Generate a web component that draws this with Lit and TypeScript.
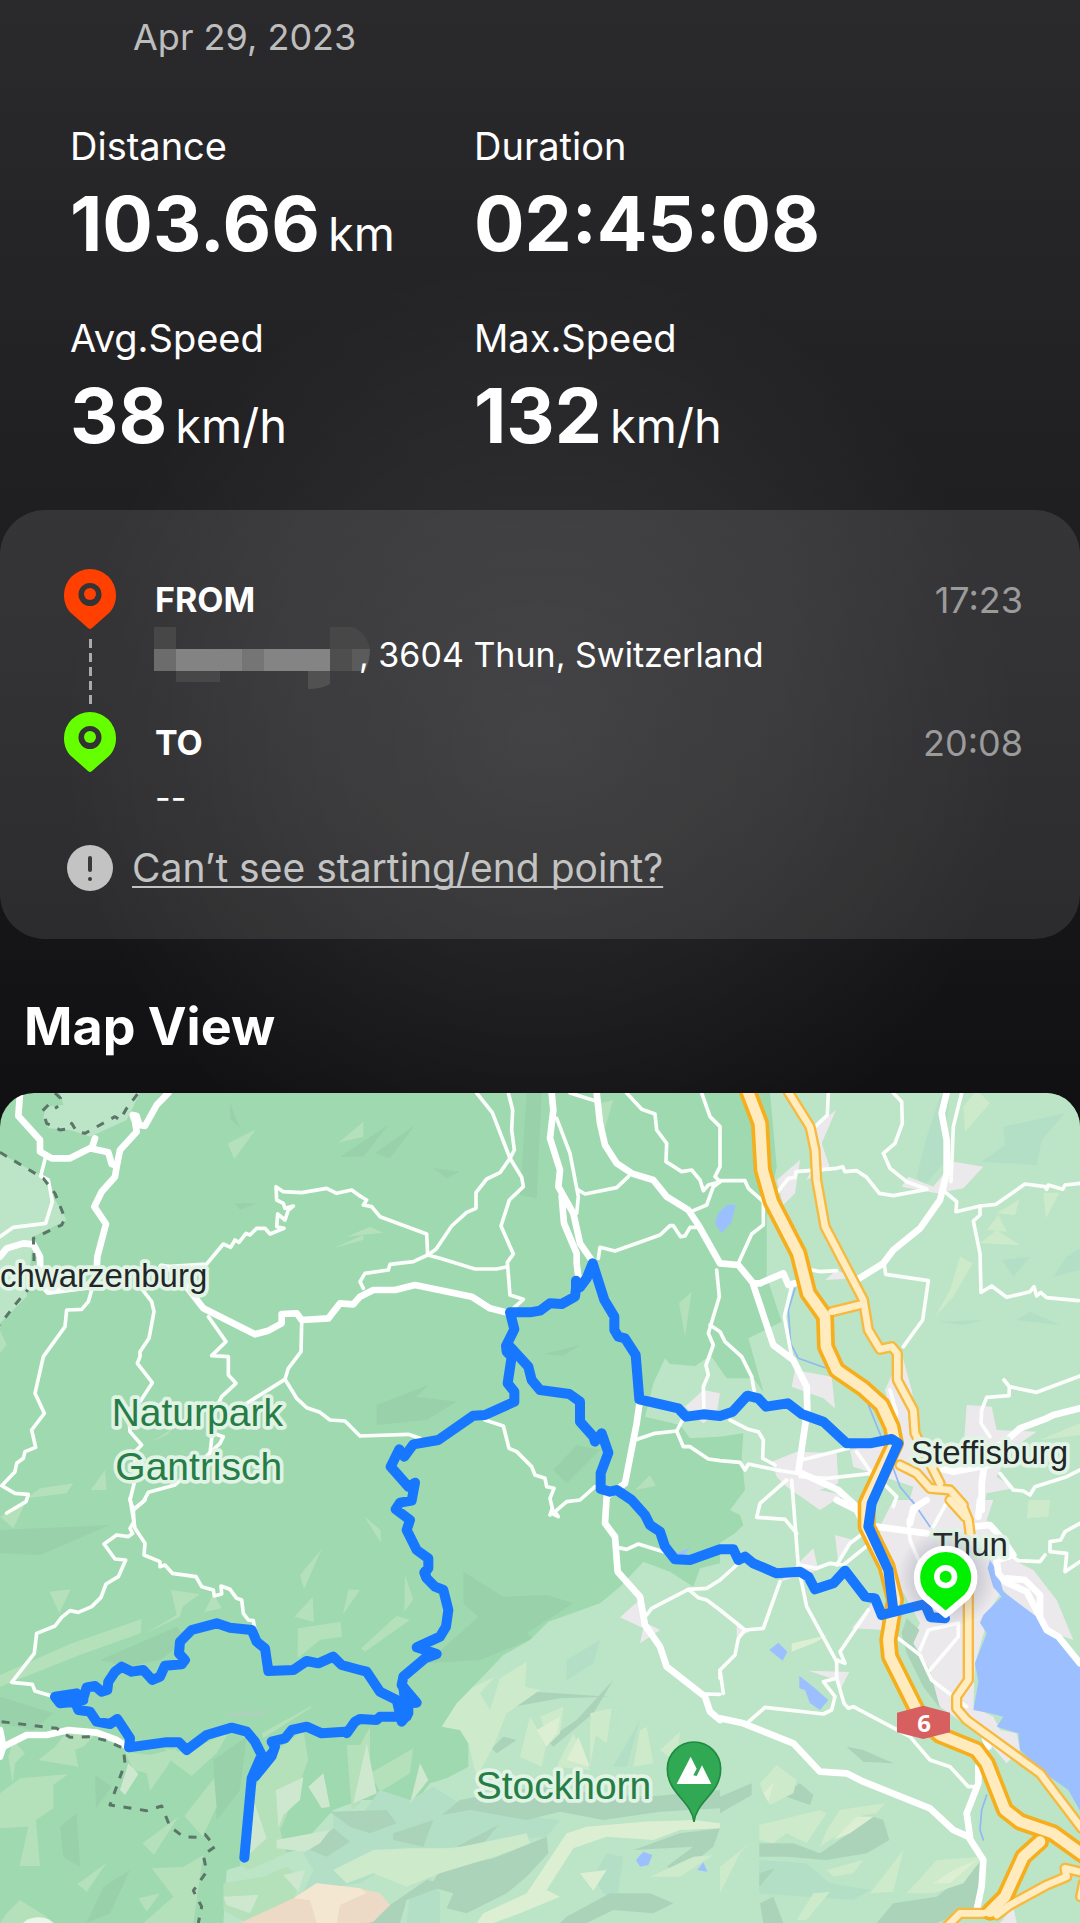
import { LitElement, html, svg, css } from "lit";
import { customElement } from "lit/decorators.js";

/* Map geometry is stored per tile; a capital letter switches to that tile's origin. */
const TILES: Record<string, [number, number]> = {
  A: [0, 0], B: [1080, 0], C: [2160, 0],
  D: [0, 1230], E: [1080, 1230], F: [2160, 1230],
};

function points(data: string): string {
  let origin: [number, number] = [0, 0];
  const out: string[] = [];
  for (const token of data.trim().split(/\s+/)) {
    if (TILES[token]) {
      origin = TILES[token];
    } else {
      const [x, y] = token.split(",").map(Number);
      out.push(`${x + origin[0]},${y + origin[1]}`);
    }
  }
  return out.join(" ");
}

const lines = (cls: string, list: string[]) =>
  list.map((d) => svg`<polyline class=${cls} points=${points(d)}></polyline>`);
const areas = (cls: string, list: string[]) =>
  list.map((d) => svg`<polygon class=${cls} points=${points(d)}></polygon>`);

const LIGHT_LAND = [
  "C 150,9 170,230 140,380 140,560 185,695 85,745 130,905 100,865 20,865 -25,800 B 1035,808 1005,828 930,822 915,805 880,880 855,980 960,1005 990,1045 C 0,1040 70,1030 65,1100 75,1200 30,1260 F 60,45 70,75 45,100 0,128 E 1080,190 1020,205 1000,260 930,215 850,185 780,260 720,310 565,365 510,420 430,465 320,580 250,680 300,690 325,730 325,800 260,835 210,850 160,915 60,900 0,900 -80,930 -190,1050 -300,1080 -400,1110 -410,1269 1080,1270 F 1090,1270 1090,-1300",
  "A 180,9 190,45 140,50 130,80 145,115 210,120 240,130 270,140 380,90 420,9",
  "A 0,190 120,255 160,320 200,390 100,440 80,620 0,700",
];
const PALE_FACETS = [
  "A 768,118 683,160 703,208", "A 1015,158 1090,95 1090,140", "B -40,440 30,410 70,428", "A 1000,475 1090,435 1090,450",
  "B 957,640 995,605 975,740", "B 825,1200 870,1155 888,1188", "B 720,40 760,30 730,130", "A 80,1225 120,1195 220,1180 200,1210",
  "A 272,1200 315,1140 320,1200", "A 455,1055 520,1015 500,1035", "A 0,720 20,765 0,790",
  "D 0,525 215,430 425,357 422,400 240,465 0,560", "D 148,275 212,268 178,340", "D 0,50 80,0 40,85", "D 513,270 600,282 548,320 540,350 437,400 530,345",
  "D 665,325 640,280 613,337", "D 900,225 965,147 912,268", "D 883,350 938,290 942,367", "D 893,385 1022,365 1026,410 960,420 893,475", "D 1045,268 1080,270 1028,345",
  "D 785,700 935,617 930,625 790,715", "E 12,48 62,90 63,128", "E 135,225 160,298 133,335", "E 110,347 150,360 15,455 3,445", "E 30,820 160,745 150,820 60,875",
];
const LEFT_FACETS = [
  "D 60,835 205,822 160,855 160,925 108,960 120,1098 58,1098 85,980 0,985 0,880", "D 40,720 75,760 45,790 38,850 25,770", "D 205,690 285,705 250,740 225,750 235,800 115,780 165,740",
  "D 375,755 450,765 530,745 505,795 450,873 440,820 400,810", "D 495,745 560,760 690,690 650,760 575,828 510,780",
  "D 553,948 642,835 650,920 608,1010", "D 427,1030 535,950 462,1065", "D 455,1105 550,1100 610,1065 600,1130 580,1269 430,1269 520,1190",
  "D 232,1153 320,1088 260,1175", "D 415,1195 480,1180 440,1235", "D 20,1240 60,1200 140,1250 150,1269 0,1269",
  "D 820,760 910,690 925,780 880,900 840,990 860,1060 745,1110 720,1095 745,900",
  "D 1040,735 1080,735 E 30,680 30,830 0,910 D 1055,930",
  "D 670,1150 790,1130 860,1100 900,1130 880,1210 740,1269 670,1230",
];
const PALE_RIDGES = [
  "D 828,870 910,832 900,900 850,945 835,985", "D 925,860 970,820 990,920 965,925", "D 762,905 800,1015 748,1062", "D 830,1020 990,990 960,1030 915,1055 830,1045",
  "D 360,870 385,790 415,822 375,885", "E 20,730 50,880 -20,910", "E 150,910 180,790 205,840", "D 670,1190 775,1185 750,1240 680,1215", "D 850,1125 915,1110 895,1175",
];
const CREAM_FACETS = [
  "E 245,680 290,610 340,560 405,530 360,580 390,630 420,535 500,485 495,560 540,570 440,640 400,740 350,830 325,730 300,690", "E 510,650 560,730 545,800 480,770",
  "E 540,650 610,620 600,700 570,730", "E 690,640 755,625 740,730 700,700", "E 640,700 690,810 590,800", "E 840,690 860,680 880,790 820,800",
  "E 900,750 960,695 950,790", "E 690,660 720,640 690,800",
  "E -80,1110 40,1050 150,1045 280,1045 500,1000 510,1030 420,1065 240,1120 140,1160 40,1120 -40,1150",
  "F 118,975 300,930 320,940 260,1030 200,1000 160,1030 118,1020", "F 320,990 360,930 420,920 495,910 470,940 430,945 390,980 300,1040",
  "F 560,1180 650,1080 790,1070 730,1150 640,1180", "F 120,850 170,795 230,840 220,880 150,915 130,880", "F 320,1110 430,1080 400,1120 340,1130", "F 450,1180 550,1050 520,1175", "F 230,1260 280,1180 330,1175 260,1260",
  "F 0,1180 60,1060 90,1030 0,1100", "E 870,1130 1000,1070 1060,1065 960,1130",
  "C 730,50 770,0 810,40 735,125", "C 720,500 758,520 700,620 645,680 690,600", "C 830,370 898,328 885,375", "C 800,420 835,375 860,425", "C 780,460 830,420 900,465", "C 970,308 1018,308 978,385", "C 960,1050 1080,1000 1080,1035", "F 925,0 990,0 985,50 920,55",
];
const BRIGHT_FACETS = [
  "E 350,1269 370,1240 500,1180 560,1090 620,1000 680,980 850,965 1000,960 1080,970 1080,985 960,990 880,1020 740,1010 640,1045 560,1170 600,1190 480,1240 400,1269",
  "E 660,1120 740,1110 700,1172", "E 530,690 600,650 590,700 560,740", "E 620,780 655,710 690,800", "F 215,455 215,430 325,405 280,430",
  "F 640,1150 700,1110 770,1080 690,1150", "F 340,1020 410,950 460,950 390,1000", "F 130,880 160,850 145,905",
];
const SHADE_FACETS = [
  "E 300,900 460,870 560,860 700,880 860,890 1080,870 1080,925 900,935 730,960 600,935 500,960 330,930 245,945", "E -90,935 80,930 110,970 30,1000 -30,980", "E 100,1000 220,960 190,1040 100,1020",
  "D 930,1050 1000,985 1050,1025 980,1070", "E 210,1160 240,1110 400,1075 560,1010 565,1060 500,1130 440,1180 320,1240 260,1225 280,1180", "E 20,1269 90,1215 200,1140 260,1155 140,1200 120,1269", "E 290,1040 415,975 370,1030 330,1045", "E 820,1050 960,1000 1080,985 1060,1040 960,1120 920,1100 1000,1040",
  "E 620,1250 750,1180 870,1180 940,1210 880,1240 760,1230 680,1269 600,1269", "E 445,610 520,575 750,590 600,595 460,620", "E 515,670 570,715 650,660 760,540 700,640 580,740", "E 395,745 430,710 470,720 410,760",
  "F 185,885 240,850 280,885 270,915", "F 118,1030 220,1030 300,1060 460,950 490,960 508,1020 440,1060 320,1080 200,1070 118,1070", "F 380,740 430,750 520,790 430,785",
  "F 0,890 95,850 95,885 0,940", "F 470,1269 520,1210 650,1190 790,1080 790,1150 770,1220 650,1269", "F 120,1210 160,1190 190,1269 130,1269", "F 118,1120 165,1105 118,1160",
  "D 675,650 690,638 800,630 785,650",
];
const TEAL_FACETS = [
  "D 905,1050 1000,985 1000,935 1080,950 E 60,870 150,900 220,860 330,930 600,960 560,1010 250,1045 100,1090 D 1080,1150 910,1175 940,1110", "E 140,1269 150,1180 210,1130 240,1180 240,1269", "E 700,1130 740,1060 790,1070 770,1200 730,1180",
  "E 620,480 720,420 700,490 620,540", "E 760,800 840,660 800,800", "C 785,215 855,165 850,110 1035,70 965,150 950,225", "C 845,510 930,500 880,560", "C 1000,560 1040,500 1080,475 1080,540",
  "C 890,690 930,665 1020,705", "C 655,695 790,690 730,705", "C 620,140 660,20 690,9 670,220 610,290 590,260", "F 118,1080 260,1090 330,1150 450,1170 400,1200 118,1180",
];
const DARK_FACETS = [
  "B 50,945 205,885 170,920 290,935 200,990 50,1005", "B 580,1140 650,1065 720,1080 620,1180", "B 550,793 660,765 610,797", "A 690,40 720,115 690,85", "A 1020,200 1165,105 1090,200",
  "B 45,190 165,105 90,205", "B 500,9 545,9 530,325 480,315", "D 300,480 530,380 560,420 480,480 380,500", "E 310,215 430,290 560,285 640,310 500,400 520,415 360,480 200,490 355,350 310,310",
  "D 0,90 330,75 120,165 0,160", "D 0,590 160,640 100,690 0,670", "B 220,235 300,245 260,265", "A 705,340 768,340 720,360",
  "D 180,980 230,940 240,1100 190,1070", "D 640,780 740,710 720,870 650,960", "D 260,1269 310,1160 390,1110 330,1240", "D 285,825 335,860 288,925",
];
const SAND = ["D 720,1269 880,1195 950,1150 1080,1165 E 60,1180 90,1215 40,1265 0,1269"];
const SAND_DARK = ["E -40,1220 60,1180 90,1215 30,1269 -30,1260", "D 770,1250 880,1195 930,1200 950,1269 860,1269"];
const TOWN = [
  "C 348,60 285,110 300,180 260,270 330,235 305,160", "C 240,210 170,270 190,345 225,310", "C 700,215 790,230 730,295 650,310 545,290 565,260 640,290",
  "C 315,570 350,540 400,565", "C 225,840 335,860 345,955 310,925 215,890", "C 495,900 545,790 575,900 600,1040 660,1100 730,1090 740,945 815,950 830,1020 950,1025 870,1080 830,1160 880,1195 800,1210 790,1260 560,1260 580,1190 400,1130 390,1080 480,1060 530,1050",
  "C 155,1115 230,1085 350,1090 355,1180 300,1200 370,1215 300,1260 200,1190 170,1160", "B 975,950 1030,900 1080,910 1070,970 1030,1000",
  "F 480,80 520,0 820,0 800,60 860,120 860,170 940,210 1010,300 1060,420 950,380 850,270 780,370 800,370 765,490 760,620 820,650 840,690 890,700 900,750 860,790 800,720 730,670 660,620 620,500 570,430 600,370 480,150",
  "F 345,105 400,120 355,190", "F 235,190 280,145 295,210 180,245", "F 395,385 455,310 500,390", "F 265,512 388,516 360,570 350,540", "F 50,370 90,395 50,410", "E 780,352 850,290 860,370 900,390 840,430 850,385",
  "F 880,1220 840,1269 890,1269", "F 285,0 300,15 345,0",
];
const WOODS = ["F 545,400 560,360 590,390 580,430 630,510 660,625 610,560 560,460", "F 545,400 560,355 598,390 575,440"];
const WATER = [
  "F 850,275 835,220 810,180 803,205 820,262 845,290 790,345 780,368 800,400 765,490 775,545 760,630 810,640 850,650 830,680 895,700 900,750 960,810 1045,870 1090,950 1090,490 1030,430 985,400 950,350",
  "C -5,370 20,345 47,345 35,395 5,430 -15,400", "F 148,450 175,428 202,455 188,482", "F 238,527 285,565 325,600 300,630 270,610 255,570 238,565",
  "E 828,1080 850,1055 877,1065 865,1095 840,1100", "E 1012,1110 1030,1087 1042,1115", "E 950,160 990,143 965,175",
];
const STREAMS = ["C 225,595 205,660 212,760 235,805 315,833", "C 445,945 500,1080 540,1190 590,1250", "F 575,0 630,80", "F 800,885 785,930 780,990 790,1020"];
const BORDERS = [
  "A 165,9 182,25 180,45 165,55", "A 145,45 128,62 140,100 180,120 210,115 215,100 230,125 255,130 345,80 360,90 380,55 415,9",
  "A 0,187 130,265 165,310 195,385 185,405 100,445 102,500 100,580 40,650 0,705",
  "D 5,665 170,685 210,712 270,710 320,722 370,745 375,790 330,915 440,932 485,918 510,980 550,1010 590,1012 615,1003 645,1040 610,1065 620,1115 580,1172 605,1220 595,1269",
];
const ROADS_THIN = [
  "A 137,200 122,258 145,270 157,335 137,400 40,412 0,440", "B 0,318 20,330 10,345 35,350 60,380 200,432 203,495 228,478 275,408 320,367 348,355 348,308 380,267 420,248 450,205 397,68 350,9",
  "A 1080,318 1055,300 1010,310 980,295 905,308 850,305 828,290 830,330 850,340 855,355 880,348 865,360 855,390 833,372 830,410 852,415 810,432 795,415 770,415 750,435 738,430 717,457 705,450 692,472 670,462 620,522 500,530",
  "B 445,9 458,60 455,120 463,180 450,205 485,262 490,290 448,330 423,408 460,492 442,517 450,615 490,628 460,655", "B 442,530 410,537 345,537 240,505 203,495 160,515 90,523 85,540 15,550 0,575 10,595",
  "A 275,600 265,635 245,658 200,660 195,710 130,800 105,910 133,970 95,1020 107,1072 75,1085 70,1105 50,1120 45,1145 5,1187 45,1210 85,1213 78,1235 20,1269",
  "A 420,590 455,635 462,665 447,745 420,785 420,800 412,820 457,878 420,935 385,960 390,1025 425,1065 405,1085 405,1170 390,1230 400,1258 430,1235 445,1207 525,1185 570,1145 660,1060 670,1040 640,1030",
  "A 625,680 678,755 635,797 685,800 685,855 708,880 665,920 645,960 630,1090", "A 905,700 903,785 865,835 855,868 740,940", "A 855,868 890,925 920,953 960,967 990,990 1035,993 1080,1038 B 145,1033 180,1045",
  "B 590,85 630,190 655,320 650,370", "B 655,300 675,312 770,293 805,260", "B 630,9 705,32", "B 800,9 845,58 885,72 890,120 920,160 918,215 965,245 995,240 1020,270 1030,302 1045,285 1080,275", "B 1025,9 1050,80 1080,110 1080,230 1065,260 1080,275 1060,290 1040,345 1000,362",
  "B 715,505 720,472 765,483 900,435 930,407 940,407 962,440 975,438 990,412 1015,412", "B 1070,540 1078,620 1045,730 1060,765 1038,825 1045,855 1030,890 1032,965", "B 1050,705 C 0,725 15,755 65,800 95,860 103,905", "B 825,1050 885,1030 950,1023 970,985", "B 950,1023 970,1070 990,1070 1045,1107 1080,1112 C 60,1117 75,1140 85,1122 170,1140 235,1150",
  "C 0,272 75,272 85,295 130,335 130,405 95,432 55,520", "C 325,9 322,75 285,110", "C 170,310 205,265 225,262 228,245 350,235 368,230 375,245 410,242 440,262 478,310 520,317 620,298", "C 520,9 545,35 547,100 525,160 490,190 510,235 560,275 620,297",
  "C 725,9 700,110 693,275", "C 668,300 710,335 708,365 780,348 828,343 915,282 975,290 980,298 985,285 1028,298 1035,285 1080,280", "C 780,348 780,375 760,393 780,490 783,607 815,588 860,622 930,605 942,590 950,618 962,607 980,623 1075,632",
  "C 275,540 300,545 350,542", "C 493,525 497,553 625,572 608,690 550,770", "C 215,590 193,680 215,800", "C 1080,858 950,907 868,890 852,870 868,890 867,917 800,922 785,960 783,1000 810,1040",
  "C 30,990 85,1018 115,1025 130,1050 128,1105 165,1125", "C 385,1075 245,1110", "C 410,1085 455,1150 320,1165 240,1160", "C 215,1170 222,1260 F 235,200 260,320 350,485", "C 200,1170 120,1240 F 110,52 195,58 230,100", "C 840,1150 880,1200 910,1203 930,1215 945,1190 1040,1160 1080,1140", "F 490,-50 530,-10 520,20", "C 510,900 530,970 520,1010",
  "F 1080,70 1035,95 1022,120 990,125 990,155 1040,160 1035,215 1080,185", "F 860,160 895,182 960,185 975,165", "F 350,195 390,130 430,100", "F 240,195 290,205 330,190 370,195 450,130", "F 445,330 360,455 375,490 350,480 350,535 310,545 345,590 335,630 310,642 135,622 80,670", "F 350,535 372,610 385,625 400,620 570,710 630,780 690,800 745,860 760,860",
  "F 180,245 130,385 75,390 0,330", "F 75,390 55,415 45,465 0,510 10,580", "F 0,240 50,195", "F 535,415 600,465 635,540 740,620", "F 715,370 715,410 630,510", "F 715,370 625,390 600,450", "F 600,15 565,60 570,120 600,190", "F 690,-10 640,80",
  "B 375,990 430,1008 447,1075 470,1085 515,1130 525,1155 555,1165 560,1190 582,1195 570,1225 578,1260 E 575,40 595,50 585,35 620,5 660,0 705,-40", "E 570,45 575,30",
  "D 435,0 400,30 402,65 390,85 398,100 385,110 350,105 312,132 345,177 377,180 355,230 318,252 303,292 275,320 235,337 210,332 185,352 165,378 110,400 103,460 35,547 97,553 105,573 155,588",
  "D 390,-5 405,85 435,130 432,165 480,185 480,200 495,195 517,220 588,230 605,260 640,270 643,288 665,282 663,258 690,268 710,295 725,300 730,340 745,360 760,362 765,390",
  "E 775,143 800,148 835,132 910,155", "E 860,345 875,325 985,268 1040,265 1080,240", "E 985,268 1015,293 1040,300 1080,330", "E 1035,582 1080,583", "E 1080,510 1080,535",
];
const ROADS_MID = [
  "A 505,9 470,45 435,108 418,105 410,78 398,75 405,95 410,125 360,180 350,230 345,260 305,305 283,350 318,402 292,500 290,540", "A 345,225 335,222 325,187 270,175 210,205 155,205 120,185 120,150 55,78 60,9", "A 285,145 275,175",
  "A 0,500 20,475 70,460 100,463 120,500 122,580 145,605 260,590 295,555", "A 485,530 510,535 560,590 610,655 765,733 805,722 845,700 845,672 890,670 905,690 985,685 1020,640 1060,643 1080,620 B 40,600 105,600 165,585 335,620 390,655 450,670",
  "B 575,9 580,60 570,145 600,240 595,290 640,370 660,460 698,515", "B 605,320 612,400 650,490 650,520 655,560", "B 840,930 830,1000 795,1180 740,1220 E 740,-10 735,70 765,110 773,215 840,290 855,375 900,440 920,500 1035,590 1050,635 1080,660 F 0,655 70,670 220,730 300,815 380,820 430,845 630,925 700,990 745,1010 790,1080 785,1160 770,1230",
  "B 710,9 720,100 735,165 770,220 815,250 880,270 920,320 985,360 1015,405 1080,520 C 55,525 100,580 120,580 190,550 205,585 225,580", "C 100,585 160,765 220,810 260,890 262,960 235,1145 355,1200 420,1260", "C 680,9 665,70 680,150 680,250 660,330 600,415 520,480 490,520 410,570",
  "C 1080,955 1000,975 980,985 900,1015 850,1060 800,1080 785,1180 785,1260 F 780,0 775,50", "C 835,1120 700,1145 640,1130", "F 470,80 620,100", "F 350,0 410,30 430,70", "F 620,0 580,25 570,70", "F 760,80 810,75 850,120 880,165 830,180 835,220 855,245 920,275 980,390 1015,410 1080,490", "F 860,235 915,240 960,285 960,350", "F 775,800 775,850 740,940 750,1010", "F 790,700 805,740",
  "D 0,760 10,740 80,705 140,705 205,690 290,698 350,720 390,745", "D 0,690 10,740 0,770",
];
const HIGHWAY = ["C 78,-10 120,100 128,240 155,335 235,490 265,610 315,680 318,770 350,840 430,895 485,945 515,1010 525,1060 440,1240 F 440,20 440,80 500,200 525,300 505,420 510,470 600,650 660,705 770,750 800,790 855,930 900,965 1000,1000 1090,1065", "F 960,1025 910,1070 855,1190 810,1235"];
const TRUNK = [
  "C 195,-10 270,110 285,180 290,270 315,410 430,630 445,720 480,778 515,770 532,790 532,870 580,960 585,1030 660,1180", "C 540,1125 590,1150 630,1195 690,1200 730,1245 F 725,10 745,60 750,100", "F 690,0 735,50", "C 335,665 430,642",
  "F 745,240 745,540 710,590 710,625 740,660 960,820 1085,985", "F 830,1245 870,1215 980,1155 1040,1130 1035,1105 1090,1118", "F 840,1225 790,1240 720,1240 675,1285", "F 1090,1150 1082,1190",
];
const ROUTE = [
  "F 675,355 632,352 615,312 485,345 465,295 435,290 375,212 340,250 285,268 265,230 240,215 170,220 100,190 75,170 55,180 40,148 0,148 E 990,180 945,178 915,140 900,95 870,75 855,45 B 815,1230 770,1200 750,1205 722,1197 722,1150 745,1088 725,1030 705,1055 700,1040 660,995 660,935 628,912 540,900 515,870 505,830 450,770",
  "F 520,330 505,210 445,80 455,10 C 535,1060 515,1047 450,1060 380,1060 310,995 245,972 203,940 138,950 115,925 82,917 38,965 0,978 B 1030,973 978,980 955,955 838,928 827,795 795,745 775,740 763,720 763,680 733,630 698,520 680,565 660,592 650,578 645,620 605,642 570,640 540,662 510,667 450,667 463,718 438,768 440,785 455,800 443,880 463,905 463,935 375,975 340,977 235,1050 160,1063 133,1100 118,1078 92,1130 145,1190 165,1178 155,1232 E 120,8 107,28 150,60 140,90 170,150 205,175 205,205 193,218 200,235 225,260 250,270 265,330 258,380 240,410 170,442 230,462 195,475 130,530 125,555 170,608 145,610 145,640 125,665 110,600 60,575 20,515 0,510 D 1025,495 1000,470 955,490 920,483 880,510 805,513 795,445 770,425 755,390 690,383 650,370 575,390 540,425 537,460 555,480 545,493 495,497 480,530 457,540 430,510 395,515 365,500 345,515 325,545 322,570 305,575 285,558 260,562 248,600 230,580 165,590 180,610 225,605 235,630 270,635 290,665 330,672 352,657 390,715 387,742 495,727 537,727 560,750 620,705 695,683 740,695 765,725 785,765 755,835 733,1073",
  "D 765,830 815,768 825,740 815,725 855,715 875,690 920,680 965,700 1035,695 1040,700 1065,665 1080,657 E 50,660 60,650 125,650", "D 790,770 770,820 815,760", "D 170,595 250,600 180,605", "E 130,560 140,650", "B 648,572 648,590", "E 195,215 198,230",
];

@customElement("route-map")
class RouteMap extends LitElement {
  static styles = css`
    :host { display: block; overflow: hidden; border-radius: 34px 34px 0 0; }
    .map { display: block; width: 100%; height: auto; font-family: "Liberation Sans", Arial, sans-serif; }
    .land { fill: #9ed9af; }
    .light { fill: #bce4c6; }
    .pale { fill: #b4e0ba; }
    .ridge { fill: #cee8cf; }
    .cream { fill: #cdebcb; }
    .bright { fill: #dcefd3; }
    .shade { fill: #aad3ba; }
    .teal { fill: #b3dfc7; }
    .dark { fill: #99d2aa; }
    .sand { fill: #f4e7d2; }
    .sanddark { fill: #ecdac6; }
    .town { fill: #ece9ec; }
    .water { fill: #9cc0ff; }
    polyline { fill: none; stroke-linejoin: round; stroke-linecap: round; }
    .stream { stroke: #8fb8f5; stroke-width: 5; }
    .border { stroke: #5b7568; stroke-width: 9; stroke-dasharray: 24 26; stroke-linecap: butt; }
    .thin { stroke: #fcfefc; stroke-width: 11; }
    .mid { stroke: #fff; stroke-width: 20; }
    .highway-edge { stroke: #f6ae1d; stroke-width: 54; }
    .highway { stroke: #ffebbd; stroke-width: 32; }
    .trunk-edge { stroke: #f7b93e; stroke-width: 34; }
    .trunk { stroke: #ffecc0; stroke-width: 20; }
    .route { stroke: #1877ff; stroke-width: 30; }
    .label { font-size: 99px; fill: #222628; stroke: #e2f4e6; stroke-width: 22; stroke-linejoin: round; paint-order: stroke; }
    .nature { font-size: 117px; fill: #267d46; stroke: #e0f3e4; }
    .shield { fill: #d85f5f; }
    .shield-text { font-family: "Noto Sans", sans-serif; font-size: 72px; font-weight: 700; fill: #fff; text-anchor: middle; }
    .poi { fill: #31a853; stroke: #218a42; stroke-width: 5; }
    .halo { fill: url(#halo); }
    .pin { fill: #00f000; stroke: #fff; stroke-width: 19; }
    .white { fill: #fff; }
    .green { fill: #00f000; }
  `;

  render() {
    return html`
      <svg class="map" viewBox="0 9 3240 2490" role="img" aria-label="Recorded route">
        <defs>
          <radialGradient id="halo">
            <stop offset="0.5" stop-color="#5b6480" stop-opacity="0.28"></stop>
            <stop offset="1" stop-color="#5b6480" stop-opacity="0"></stop>
          </radialGradient>
        </defs>
        <rect class="land" y="9" width="3240" height="2490"></rect>
        ${areas("dark", DARK_FACETS)}
        ${areas("light", LIGHT_LAND)}
        ${areas("pale", PALE_FACETS)}
        ${areas("pale", LEFT_FACETS)}
        ${areas("teal", TEAL_FACETS)}
        ${areas("shade", SHADE_FACETS)}
        ${areas("ridge", PALE_RIDGES)}
        ${areas("cream", CREAM_FACETS)}
        ${areas("bright", BRIGHT_FACETS)}
        ${areas("sanddark", SAND)}
        ${areas("sand", ["D 880,1195 950,1150 1080,1165 E 20,1178 -60,1215 -70,1269 D 950,1269"])}
        ${areas("sanddark", SAND_DARK)}
        ${areas("town", TOWN)}
        ${areas("shade", WOODS)}
        ${areas("water", WATER)}
        ${lines("stream", STREAMS)}
        ${lines("thin", ROADS_THIN)}
        ${lines("mid", ROADS_MID)}
        ${lines("border", BORDERS)}
        ${lines("trunk-edge", TRUNK)}
        ${lines("highway-edge", HIGHWAY)}
        ${lines("trunk", TRUNK)}
        ${lines("highway", HIGHWAY)}
        <ellipse class="white" cx="115" cy="2520" rx="55" ry="38" opacity="0.7"></ellipse>

        <polygon class="shield" points=${points("F 531,638 610,617 690,638 690,697 610,717 531,697")}></polygon>
        <text class="shield-text" x="2772" y="1926">6</text>

        <text class="label" x="0" y="592">chwarzenburg</text>
        <text class="label nature" x="335" y="1008">Naturpark</text>
        <text class="label nature" x="346" y="1170">Gantrisch</text>
        <text class="label" x="2733" y="1122">Steffisburg</text>
        <text class="label" x="2798" y="1397">Thun</text>
        <text class="label nature" x="1427" y="2127">Stockhorn</text>

        <path class="poi" d="M2082 2196C2074 2130 2002 2112 2002 2036A80 80 0 0 1 2162 2036C2162 2112 2090 2130 2082 2196Z"></path>
        <path class="white" d="M2030 2082L2072 2000L2090 2036L2080 2056L2090 2058L2106 2026L2134 2082Z"></path>

        ${lines("route", ROUTE)}
        <circle class="halo" cx="2840" cy="1465" r="150"></circle>
        <path class="pin" d="M2837 1574L2774 1521A86 86 0 1 1 2900 1521Z" stroke-linejoin="round"></path>
        <circle class="white" cx="2837" cy="1460" r="35"></circle>
        <circle class="green" cx="2837" cy="1460" r="18"></circle>
      </svg>
    `;
  }
}

interface Stat { label: string; value: string; unit?: string; }
const STATS: Stat[] = [
  { label: "Distance", value: "103.66", unit: "km" },
  { label: "Duration", value: "02:45:08" },
  { label: "Avg.Speed", value: "38", unit: "km/h" },
  { label: "Max.Speed", value: "132", unit: "km/h" },
];

const pinIcon = (color: string) => html`
  <svg class="pin" viewBox="0 0 52 60" aria-hidden="true">
    <path fill=${color} fill-rule="evenodd" d="M26 0A26 26 0 0 1 52 26C52 34 49 40 45 44L28 59Q26 61 24 59L7 44C3 40 0 34 0 26A26 26 0 0 1 26 0ZM26 14A11 11 0 1 0 26 37A11 11 0 1 0 26 14Z"></path>
    <circle cx="26" cy="25" r="6" fill=${color}></circle>
  </svg>`;

@customElement("app-root")
class AppRoot extends LitElement {
  static styles = css`
    :host { display: block; font-family: Inter, "Open Sans", sans-serif; color: #fff; }
    .page {
      background:
        radial-gradient(circle at 50% 740px, rgba(255, 255, 255, 0.09), rgba(255, 255, 255, 0.05) 250px, rgba(255, 255, 255, 0) 480px),
        linear-gradient(#2a2a2c 0, #1f1f22 510px, #111113 1093px);
      overflow: hidden;
    }
    .date { display: block; padding: 12px 0 0 133px; font-size: 36px; line-height: 50px; color: #bdbdbe; }
    .stats { display: grid; grid-template-columns: 404px 1fr; row-gap: 44px; margin: 0; padding: 60px 40px 48px 70px; }
    .stat { display: flex; flex-direction: column; }
    dt { font-size: 38px; line-height: 48px; }
    dd { margin: 0; height: 100px; display: flex; align-items: baseline; gap: 8px; }
    .value { font-size: 75px; line-height: 108px; font-weight: 700; }
    .unit { font-size: 47px; }
    .card { background: rgba(255, 255, 255, 0.1); border-radius: 45px; padding: 59px 57px 48px 64px; }
    .stops { list-style: none; margin: 0; padding: 0; }
    .stop { display: grid; grid-template-columns: 52px 1fr auto; column-gap: 39px; height: 143px; }
    .stop:last-child { height: 133px; }
    .track { display: flex; flex-direction: column; align-items: center; gap: 10px; }
    .pin { display: block; width: 52px; height: 60px; }
    .dash { width: 3px; height: 66px; background: repeating-linear-gradient(#aaa 0 9px, transparent 9px 14px); }
    .place { padding-top: 8px; }
    .name { margin: 0; font-size: 34px; line-height: 46px; font-weight: 700; }
    .address { margin: 0; display: flex; font-size: 34px; line-height: 64px; white-space: pre; }
    .redacted { width: 204px; height: 62px; overflow: visible; }
    .time { padding-top: 8px; font-size: 36px; line-height: 46px; color: #9b9b9c; }
    .help { display: flex; align-items: center; gap: 19px; height: 46px; padding-left: 3px; color: #c3c3c4; }
    .info { width: 46px; height: 46px; flex: none; }
    .help a { color: inherit; font-size: 39px; line-height: 46px; text-decoration-thickness: 2px; text-underline-offset: 4px; text-decoration-skip-ink: none; }
    h2 { margin: 0; padding: 55px 24px 34px; font-size: 52px; line-height: 65px; font-weight: 700; }
  `;

  render() {
    return html`
      <main class="page">
        <time class="date" datetime="2023-04-29">Apr 29, 2023</time>
        <dl class="stats">
          ${STATS.map((s) => html`
            <div class="stat">
              <dt>${s.label}</dt>
              <dd><span class="value">${s.value}</span>${s.unit ? html`<span class="unit">${s.unit}</span>` : ""}</dd>
            </div>`)}
        </dl>
        <section class="card">
          <ul class="stops">
            <li class="stop">
              <div class="track">${pinIcon("#ff4000")}<span class="dash"></span></div>
              <div class="place">
                <p class="name">FROM</p>
                <p class="address"><svg class="redacted" viewBox="0 0 204 62" aria-hidden="true">
                  <path fill="#474748" d="M-1 4h22v22h-22zM175 4h22q14 4 18 22h-40zM21 48h44v11h-44z"></path>
                  <path fill="#515152" d="M153 48h22v13q-8 5-22 5z"></path>
                  <path fill="#6c6c6d" d="M-1 26h22v22h-22z"></path>
                  <path fill="#838384" d="M21 26h66v22h-66z"></path>
                  <path fill="#757576" d="M87 26h22v22h-22z"></path>
                  <path fill="#848485" d="M109 26h66v22h-66z"></path>
                  <path fill="#4e4e4f" d="M175 26h22v22h-22z"></path>
                  <path fill="#5b5b5c" d="M197 26h18q0 12-5 22h-13z"></path>
                </svg><span>, 3604 Thun, Switzerland</span></p>
              </div>
              <time class="time">17:23</time>
            </li>
            <li class="stop">
              <div class="track">${pinIcon("#66ff00")}</div>
              <div class="place">
                <p class="name">TO</p>
                <p class="address">--</p>
              </div>
              <time class="time">20:08</time>
            </li>
          </ul>
          <div class="help">
            <svg class="info" viewBox="0 0 46 46" aria-hidden="true">
              <circle cx="23" cy="23" r="23" fill="#c3c3c4"></circle>
              <path d="M23 13V25" stroke="#39393a" stroke-width="4" stroke-linecap="round"></path>
              <circle cx="23" cy="34" r="2" fill="#39393a"></circle>
            </svg>
            <a href="#help">Can’t see starting/end point?</a>
          </div>
        </section>
        <h2>Map View</h2>
        <route-map></route-map>
      </main>
    `;
  }
}
